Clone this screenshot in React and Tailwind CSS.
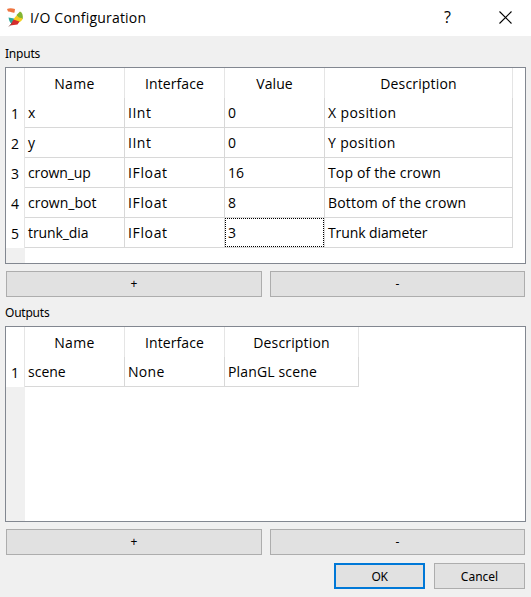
import React from 'react';

const INPUTS = [
  ['x', 'IInt', '0', 'X position'],
  ['y', 'IInt', '0', 'Y position'],
  ['crown_up', 'IFloat', '16', 'Top of the crown'],
  ['crown_bot', 'IFloat', '8', 'Bottom of the crown'],
  ['trunk_dia', 'IFloat', '3', 'Trunk diameter'],
];
const OUTPUTS = [['scene', 'None', 'PlanGL scene']];

const TRACKING = {
  'IInt': 'tracking-[0.5px]',
  'IFloat': 'tracking-[0.65px]',
  'X position': 'tracking-[0.4px]',
  'Y position': 'tracking-[0.35px]',
  'Top of the crown': 'tracking-[0.15px]',
  'Bottom of the crown': 'tracking-[0.2px]',
  'Trunk diameter': 'tracking-[-0.1px]',
  'crown_up': 'tracking-[-0.1px]',
  'trunk_dia': 'tracking-[-0.1px]',
  'PlanGL scene': 'tracking-[0.15px]',
  'None': 'tracking-[0.3px]',
  'Name': 'tracking-[0.4px]',
  'Interface': 'tracking-[0.1px]',
  'Value': 'tracking-[0.1px]',
  'Description': 'tracking-[0.15px]',
};

function DataTable({ heads, rows, columns, height, focus }) {
  return (
    <div className={`flex w-[521px] border border-[#828790] bg-white ${height}`}>
      <div className="flex w-[19px] shrink-0 flex-col bg-[#f0f0f0]">
        <div className="h-[30px] border-r border-[#e5e5e5] bg-white" />
        {rows.map((_, i) => (
          <div key={i} className="flex h-[30px] items-center justify-center border-r border-[#e5e5e5] bg-white pt-px">
            {i + 1}
          </div>
        ))}
      </div>
      <div>
        <div className={`grid h-[30px] ${columns}`}>
          {heads.map((h) => (
            <div key={h} className={`flex items-center justify-center border-r border-[#e5e5e5] pt-px ${TRACKING[h] || ''}`}>{h}</div>
          ))}
        </div>
        {rows.map((row, r) => (
          <div key={r} className={`grid h-[30px] ${columns}`}>
            {row.map((cell, c) => (
              <div key={c} className="border-r border-b border-[#d8d8d8]">
                <div className={`flex h-[29px] items-center border border-dotted pl-[2px] ${TRACKING[cell] || ''} ${focus && focus[0] === r && focus[1] === c ? 'border-black' : 'border-transparent'}`}>
                  {cell}
                </div>
              </div>
            ))}
          </div>
        ))}
      </div>
    </div>
  );
}

function AddRemove() {
  return (
    <div className="ml-px mt-[7px] flex gap-2 font-['Noto_Sans',sans-serif] text-[12px]">
      <button className="flex h-[26px] w-[256px] items-center justify-center border border-[#adadad] bg-[#e1e1e1]">+</button>
      <button className="flex h-[26px] w-[255px] items-center justify-center border border-[#adadad] bg-[#e1e1e1]">-</button>
    </div>
  );
}

function AppLogo() {
  return (
    <svg width="18" height="20" viewBox="0 0 18 20">
      <path d="M0 1C2 0 5 0 8 1L7.500 4.500C6 5.500 5 3.500 1 3.500Z" fill="#ef7540" />
      <path d="M9.500 7 13 3.500C15.500 4.500 16 7 15.800 11L11.500 10.500Z" fill="#83b532" />
      <path d="M7 10.500 9.500 7.500 12 9.500 15.800 10.500C15 12.500 13.500 14 11.500 14.500L7 12.500Z" fill="#f3cf20" />
      <path d="M1.500 9.500 7 10.500 6.500 13 4.500 15.500C2.500 14.500 2 12 1.500 9.500Z" fill="#2aa99b" />
      <path d="M6.500 11.500 12.500 13.500 10.500 16.500 3 17.500 4.500 15Z" fill="#d52c2c" />
      <path d="M2 18.500 5 15" stroke="#783d38" strokeWidth=".7" />
    </svg>
  );
}

export default function App() {
  return (
    <div className="flex h-[597px] w-[531px] flex-col bg-[#f0f0f0] font-['Open_Sans',sans-serif] text-[14px] leading-[20px] text-black">
      <header className="flex h-[36px] items-center bg-white pl-[7px]">
        <AppLogo />
        <h1 className="ml-[5px] text-[14px] tracking-[0.2px]">I/O Configuration</h1>
        <span className="ml-auto mr-[48px] mt-[-2px] text-[16px]">?</span>
        <svg className="mr-[19px] mt-[-2px]" width="13" height="13" viewBox="0 0 13 13" fill="none" stroke="black" strokeWidth="1.1">
          <path d="M.5 .5 12.500 12.500M12.500 .5 .5 12.500" />
        </svg>
      </header>
      <main className="flex flex-col pl-[5px]">
        <div className="flex h-[31px] items-center pt-[4px] font-['Noto_Sans',sans-serif] text-[12px] tracking-[-0.22px]">Inputs</div>
        <DataTable
          heads={['Name', 'Interface', 'Value', 'Description']}
          rows={INPUTS}
          columns="grid-cols-[100px_100px_100px_188px]"
          height="h-[197px]"
          focus={[4, 2]}
        />
        <AddRemove />
        <div className="flex h-[29px] items-center pt-[3px] font-['Noto_Sans',sans-serif] text-[12px] tracking-[-0.22px]">Outputs</div>
        <DataTable
          heads={['Name', 'Interface', 'Description']}
          rows={OUTPUTS}
          columns="grid-cols-[100px_100px_134px]"
          height="h-[196px]"
        />
        <AddRemove />
        <div className="mr-[6px] mt-2 flex justify-end gap-[9px] font-['Noto_Sans',sans-serif] text-[12px]">
          <button className="flex h-[26px] w-[91px] items-center justify-center border-2 border-[#0078d7] bg-[#e1e1e1] pt-px tracking-[-0.3px]">OK</button>
          <button className="flex h-[26px] w-[91px] items-center justify-center border border-[#adadad] bg-[#e1e1e1] pt-px">Cancel</button>
        </div>
      </main>
    </div>
  );
}
